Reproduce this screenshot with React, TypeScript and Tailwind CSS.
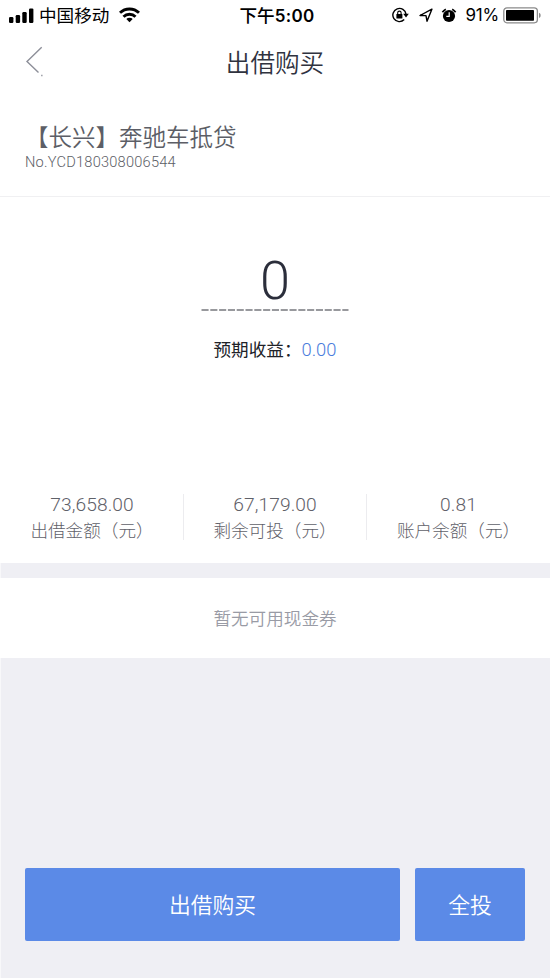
const stats = [
  { value: '73,658.00', label: '出借金额（元）' },
  { value: '67,179.00', label: '剩余可投（元）' },
  { value: '0.81', label: '账户余额（元）' },
]

function SignalIcon() {
  return (
    <svg width="25" height="15" viewBox="0 0 25 15" fill="black">
      <rect x="0" y="9" width="4.4" height="6" rx="1.2" />
      <rect x="6.7" y="7" width="4.4" height="8" rx="1.2" />
      <rect x="13.3" y="4" width="4.4" height="11" rx="1.2" />
      <rect x="20" y="0.4" width="4.4" height="14.6" rx="1.2" />
    </svg>
  )
}

function WifiIcon() {
  return (
    <svg width="21" height="16" viewBox="0 0 21 16" fill="none" stroke="black" strokeWidth="2.9">
      <path d="M1 5.8a13.6 13.6 0 0 1 19 0" />
      <path d="M4.5 9.8a8.5 8.5 0 0 1 12 0" />
      <path d="M10.5 15.2l-3.2-3.1a4.6 4.6 0 0 1 6.4 0z" fill="black" stroke="none" />
    </svg>
  )
}

function RotationLockIcon() {
  return (
    <svg width="17" height="16" viewBox="0 0 17 16" fill="none" stroke="black" strokeWidth="1.4">
      <path d="M12.2 12.6A6.6 6.6 0 1 1 14 7.2" />
      <path d="M11.2 6.8h5.6L14 10.4z" fill="black" stroke="none" />
      <rect x="4.4" y="6.9" width="6" height="4.5" rx="0.5" fill="black" stroke="none" />
      <path d="M5.7 7.2V5.8a1.7 1.7 0 0 1 3.4 0v1.4" strokeWidth="1.1" />
    </svg>
  )
}

function LocationIcon() {
  return (
    <svg width="14" height="14" viewBox="0 0 14 14" fill="none" stroke="black" strokeWidth="1.4" strokeLinejoin="round">
      <path d="M12.9 1.2L1 7.5l6 .1 1 5.6z" />
    </svg>
  )
}

function AlarmIcon() {
  return (
    <svg width="16" height="15" viewBox="0 0 16 15" fill="none">
      <circle cx="8" cy="8" r="6.1" fill="black" />
      <path d="M1.4 4.2a8.6 8.6 0 0 1 3.4-3M14.6 4.2a8.6 8.6 0 0 0-3.4-3" stroke="black" strokeWidth="1.7" />
      <path d="M8.2 4.3v4H5.3" stroke="white" strokeWidth="1.2" />
    </svg>
  )
}

function BatteryIcon() {
  return (
    <svg width="39" height="17" viewBox="0 0 39 17">
      <rect x="0.8" y="0.8" width="33.6" height="15" rx="3.2" fill="none" stroke="#8b8b8b" strokeWidth="1.3" />
      <rect x="3" y="3" width="28" height="10.8" rx="0.8" fill="black" />
      <path d="M36 5.8c2.2.7 2.2 4.5 0 5.2z" fill="#8b8b8b" />
    </svg>
  )
}

function StatusBar() {
  return (
    <div className="relative flex h-[30px] items-center justify-between pr-[8px] pl-[9px] text-black">
      <div className="flex items-center">
        <SignalIcon />
        <span className="ml-[5px] text-[17.6px] leading-[30px]">中国移动</span>
        <span className="ml-[10px]">
          <WifiIcon />
        </span>
      </div>
      <div className="absolute inset-x-0 text-center text-[17.6px] leading-[30px] font-medium">
        <span className="pl-1">下午</span>
        <span className="font-['Inter'] text-[17px] font-semibold tracking-[0.3px]">5:00</span>
      </div>
      <div className="flex items-center">
        <RotationLockIcon />
        <span className="ml-[10px]">
          <LocationIcon />
        </span>
        <span className="ml-[8px]">
          <AlarmIcon />
        </span>
        <span className="ml-[8px] font-['Inter'] text-[17px] leading-[30px] tracking-[-0.2px]">91%</span>
        <span className="ml-[4px]">
          <BatteryIcon />
        </span>
      </div>
    </div>
  )
}

export default function App() {
  return (
    <div className="flex h-[978px] w-[550px] flex-col border-l border-[#f8f8fa] bg-[#efeff4] font-['Noto_Sans_CJK_SC',sans-serif]">
      <div className="-ml-px bg-white">
        <StatusBar />
        <header className="relative flex h-[66px] items-center justify-center">
          <button className="absolute top-[16px] left-[25px]" aria-label="返回">
            <svg width="20" height="32" viewBox="0 0 20 32" fill="none" stroke="#8d8f99" strokeWidth="1.4">
              <path d="M16.7 1.3L2 15.4l11.5 11.2" />
              <path d="M16.2 29.5h1.3" />
            </svg>
          </button>
          <h1 className="-mt-1 text-[24.6px] leading-[62px] font-[350] text-[#30333f]">出借购买</h1>
        </header>
        <div className="h-[101px] border-b border-[#f0f0f2] pt-[24px] pl-[25px]">
          <div className="text-[23.5px] leading-[32px] font-[350] text-[#5c5e66]">【长兴】奔驰车抵贷</div>
          <div className="font-['Roboto'] text-[14.6px] leading-[20px] font-light tracking-[0.23px] text-[#5c5e66]">
            No.YCD180308006544
          </div>
        </div>
      </div>

      <div className="-ml-px flex h-[366px] flex-col items-center bg-white">
        <div className="mt-[51px] h-[66px] font-['Roboto'] text-[54px] leading-[66px] font-light text-[#2b2e3b]">0</div>
        <svg className="-mt-[5px]" width="148" height="2" viewBox="0 0 148 2">
          <path d="M0.5 1h147" stroke="#77787d" strokeWidth="1.3" strokeDasharray="7.1 1.7" />
        </svg>
        <div className="mt-[24px] flex text-[17.6px] leading-[28px]">
          <span className="text-[#202228]">预期收益：</span>
          <span className="pt-px font-['Roboto'] text-[18.4px] font-light text-[#4a7cdc]">0.00</span>
        </div>
        <div className="mt-[130px] grid w-full grid-cols-3 pl-px">
          {stats.map((stat) => (
            <div key={stat.label} className="h-[46px] border-r border-[#ececef] text-center text-[#5f6169] last:border-r-0">
              <div className="font-['Roboto'] text-[19.2px] leading-[22px] font-light tracking-[0.1px]">{stat.value}</div>
              <div className="text-[17.6px] leading-[28px] font-light">{stat.label}</div>
            </div>
          ))}
        </div>
      </div>

      <div className="mt-[15px] -ml-px h-[80px] bg-white text-center text-[17.6px] leading-[80px] font-[350] text-[#999ba5]">
        暂无可用现金券
      </div>

      <div className="mt-auto mb-[37px] flex gap-[15px] pr-[25px] pl-[24px] text-[21.8px] font-[350] text-white">
        <button className="h-[73px] flex-1 rounded-[2px] bg-[#5b8ae7]">出借购买</button>
        <button className="h-[73px] w-[110px] rounded-[2px] bg-[#5b8ae7]">全投</button>
      </div>
    </div>
  )
}
